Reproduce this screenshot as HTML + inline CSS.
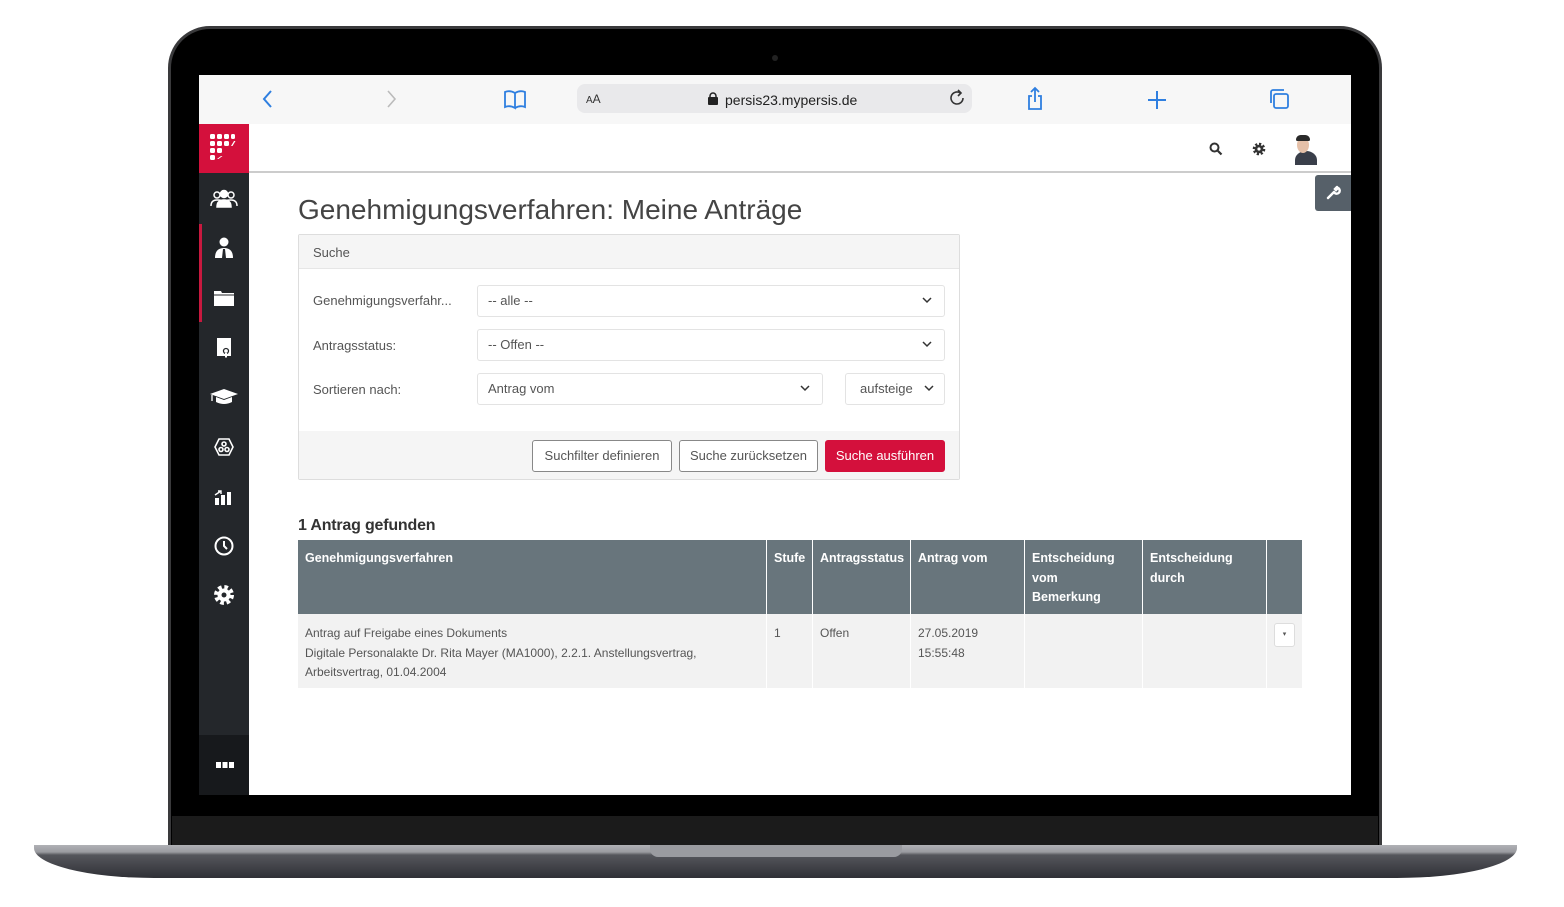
<!DOCTYPE html>
<html><head><meta charset="utf-8"><style>
*{box-sizing:border-box;margin:0;padding:0}
body{width:1564px;height:907px;background:#fff;position:relative;overflow:hidden;font-family:"Liberation Sans",sans-serif;color:#444}
.a{position:absolute}
.sel{position:absolute;border:1px solid #e3e3e3;border-radius:3px;background:#fff;font-size:13px;color:#555;padding:0 10px;line-height:30px}
.sel svg{position:absolute;right:12px;top:11px}
.btn{position:absolute;top:440px;height:32px;border:1px solid #888;border-radius:3px;background:#fff;font-size:13px;color:#555;line-height:30px;text-align:center}
.th{position:absolute;top:540px;height:74px;border-left:1px solid #fff;color:#fff;font-size:12.5px;font-weight:bold;line-height:19.5px;padding:9px 7px 0}
.td{position:absolute;top:614px;height:74px;border-left:1px solid #fff;font-size:12px;color:#555;line-height:19.5px;padding:10px 7px 0}
</style></head><body>
<!-- laptop -->
<div class="a" style="left:168px;top:26px;width:1214px;height:830px;background:#000;border-radius:42px 42px 0 0;border:3px solid #3a3a3c"></div>
<div class="a" style="left:172px;top:816px;width:1206px;height:30px;background:#1b1b1b"></div>
<div class="a" style="left:34px;top:845px;width:1483px;height:33px;background:linear-gradient(#b0b1b5 0,#9a9ba0 7px,#55565c 10px,#2f3036 33px);border-radius:0 0 120px 120px/0 0 30px 30px"></div>
<div class="a" style="left:650px;top:845px;width:252px;height:12px;background:#9a9ba0;border-radius:0 0 8px 8px"></div>
<div class="a" style="left:772px;top:55px;width:6px;height:6px;border-radius:50%;background:#222"></div>
<!-- screen -->
<div class="a" style="left:199px;top:75px;width:1152px;height:720px;background:#fff;overflow:hidden">
 <div class="a" style="left:0;top:0;width:1152px;height:49px;background:#f7f7f7"></div>
 <svg class="a" style="left:62px;top:14px" width="14" height="20"><path d="M10 2L3 10l7 8" fill="none" stroke="#2f7fe0" stroke-width="2"/></svg>
 <svg class="a" style="left:185px;top:14px" width="14" height="20"><path d="M4 2l7 8-7 8" fill="none" stroke="#bbb" stroke-width="1.6"/></svg>
 <svg class="a" style="left:304px;top:13px" width="24" height="22"><path d="M2 4q5-2 10 1v15q-5-3-10-1zM12 5q5-3 10-1v15q-5-2-10 1" fill="none" stroke="#2f7fe0" stroke-width="1.8"/></svg>
 <div class="a" style="left:378px;top:9px;width:395px;height:29px;background:#e9e9eb;border-radius:8px"></div>
 <div class="a" style="left:387px;top:17px;font-size:12px;color:#333"><span style="font-size:10px">A</span>A</div>
 <svg class="a" style="left:508px;top:17px" width="12" height="13"><rect x="1" y="5" width="10" height="8" rx="1" fill="#222"/><path d="M3 6V4a3 3 0 016 0v2" fill="none" stroke="#222" stroke-width="1.5"/></svg>
 <div class="a" style="left:526px;top:17px;font-size:14px;color:#222">persis23.mypersis.de</div>
 <svg class="a" style="left:750px;top:14px" width="18" height="20"><path d="M14 9a6 6 0 11-3-5.2" fill="none" stroke="#333" stroke-width="1.6"/><path d="M9 1l3 3-3 3" fill="none" stroke="#333" stroke-width="1.6"/></svg>
 <svg class="a" style="left:826px;top:11px" width="20" height="26"><path d="M7 10H4v13h12V10h-3M10 2v14M6 6l4-4 4 4" fill="none" stroke="#2f7fe0" stroke-width="1.8"/></svg>
 <svg class="a" style="left:948px;top:15px" width="20" height="20"><path d="M10 1v18M1 10h18" stroke="#2f7fe0" stroke-width="2"/></svg>
 <svg class="a" style="left:1069px;top:13px" width="22" height="22"><rect x="6" y="6" width="14" height="14" rx="2" fill="none" stroke="#2f7fe0" stroke-width="1.8"/><path d="M3 15V4a2 2 0 012-2h11" fill="none" stroke="#2f7fe0" stroke-width="1.8"/></svg>
 <!-- app header -->
 <div class="a" style="left:0;top:49px;width:50px;height:49px;background:#d4103c"></div>
 <svg class="a" style="left:11px;top:59px" width="28" height="28" fill="#fff"><g><rect x="0" y="0" width="5" height="5" rx="1.5"/><rect x="7" y="0" width="5" height="5" rx="1.5"/><rect x="14" y="0" width="5" height="5" rx="1.5"/><rect x="21" y="0" width="4" height="5" rx="1.5"/><rect x="0" y="7" width="5" height="5" rx="1.5"/><rect x="7" y="7" width="5" height="5" rx="1.5"/><rect x="14" y="7" width="5" height="5" rx="1.5"/><rect x="0" y="14" width="5" height="5" rx="1.5"/><rect x="7" y="14" width="5" height="5" rx="1.5"/><rect x="0" y="21" width="5" height="5" rx="1.5"/><path d="M21 12l3-5h1.5l-3 5zM7 25l4-3h1.5l-4 3z"/></g></svg>
 <div class="a" style="left:50px;top:96px;width:1102px;height:2px;background:#ccc"></div>
 <svg class="a" style="left:1010px;top:67px" width="14" height="14"><circle cx="5.5" cy="5.5" r="4" fill="none" stroke="#333" stroke-width="2"/><path d="M8.5 8.5l4 4" stroke="#333" stroke-width="2.2"/></svg>
 <svg class="a" style="left:1053px;top:67px" width="14" height="14"><circle cx="7" cy="7" r="5" fill="none" stroke="#333" stroke-width="2.6" stroke-dasharray="2.2 1.7"/><circle cx="7" cy="7" r="4.3" fill="#333"/><circle cx="7" cy="7" r="1.6" fill="#fff"/></svg>
 <div class="a" style="left:1090px;top:60px;width:28px;height:30px;overflow:hidden">
  <div class="a" style="left:6px;top:16px;width:22px;height:18px;background:#3a3f4a;border-radius:50% 50% 0 0"></div>
  <div class="a" style="left:8px;top:2px;width:12px;height:16px;background:#e5c0a8;border-radius:50%"></div>
  <div class="a" style="left:7px;top:0;width:14px;height:6px;background:#2a2a2a;border-radius:7px 7px 2px 2px"></div>
 </div>
 <div class="a" style="left:1116px;top:100px;width:36px;height:36px;background:#566069;border-radius:3px 0 0 3px"></div>
 <svg class="a" style="left:1126px;top:110px" width="16" height="16"><path d="M3 13l6-6M9 7a3 3 0 104-4l-2 2-1-1 2-2" fill="none" stroke="#fff" stroke-width="2.4" stroke-linecap="round"/></svg>
 <!-- sidebar -->
 <div class="a" style="left:0;top:98px;width:50px;height:622px;background:#24272b"></div>
 <div class="a" style="left:0;top:660px;width:50px;height:60px;background:#17191c"></div>
 <div class="a" style="left:0;top:149px;width:3px;height:98px;background:#c8193f"></div>
 <svg class="a" style="left:11px;top:114px" width="28" height="20" fill="none" stroke="#fff" stroke-width="1.5"><circle cx="7" cy="6" r="3"/><circle cx="21" cy="6" r="3"/><path d="M1 17q0-6 6-6t5 2M27 17q0-6-6-6t-5 2"/><circle cx="14" cy="5" r="3.5" fill="#fff"/><path d="M7 18q0-7 7-7t7 7z" fill="#fff"/></svg>
 <svg class="a" style="left:15px;top:162px" width="20" height="22" fill="#fff"><circle cx="10" cy="5" r="4.5"/><path d="M1 21q0-10 9-10t9 10z"/><path d="M9 12h2l1 9h-4z" fill="#24272b"/></svg>
 <svg class="a" style="left:15px;top:215px" width="20" height="16" fill="#fff"><path d="M0 1h7l1 2h12v13H0z"/><path d="M0 5h20" stroke="#24272b" stroke-width="1"/></svg>
 <svg class="a" style="left:17px;top:262px" width="16" height="22" fill="#fff"><path d="M1 1h14v18H1z"/><circle cx="10" cy="14" r="2.5" fill="none" stroke="#24272b" stroke-width="1.3"/><path d="M9 16v5l1-1 1 1v-5" fill="#fff"/></svg>
 <svg class="a" style="left:11px;top:314px" width="28" height="16" fill="#fff"><path d="M0 5l14-5 14 5-14 5z"/><path d="M6 8v5q8 4 16 0V8l-8 3z"/><path d="M2 6v6" stroke="#fff" stroke-width="1.3"/></svg>
 <svg class="a" style="left:15px;top:362px" width="20" height="20" fill="none" stroke="#fff" stroke-width="1.6"><path d="M5 2h10l4 8-4 8H5L1 10z"/><circle cx="10" cy="7" r="2"/><circle cx="7" cy="12.5" r="2"/><circle cx="13" cy="12.5" r="2"/></svg>
 <svg class="a" style="left:15px;top:411px" width="20" height="20" fill="#fff"><rect x="1" y="12" width="4" height="7"/><rect x="7" y="9" width="4" height="10"/><rect x="13" y="6" width="4" height="13"/><path d="M1 9l6-4M4 5h3v3" stroke="#fff" stroke-width="1.4" fill="none"/></svg>
 <svg class="a" style="left:14px;top:460px" width="22" height="22" fill="none" stroke="#fff" stroke-width="2"><circle cx="11" cy="11" r="8.5"/><path d="M11 6v5l3 3"/></svg>
 <svg class="a" style="left:14px;top:509px" width="22" height="22"><circle cx="11" cy="11" r="8" fill="none" stroke="#fff" stroke-width="4" stroke-dasharray="3.6 2.7"/><circle cx="11" cy="11" r="6.5" fill="#fff"/><circle cx="11" cy="11" r="2.5" fill="#24272b"/></svg>
 <svg class="a" style="left:17px;top:687px" width="18" height="6" fill="#fff"><rect x="0" y="0" width="5" height="6"/><rect x="6.5" y="0" width="5" height="6"/><rect x="13" y="0" width="5" height="6"/></svg>
 <!-- content -->
 <div class="a" style="left:99px;top:119px;font-size:28px;color:#444">Genehmigungsverfahren: Meine Anträge</div>
 <div class="a" style="left:99px;top:159px;width:662px;height:246px;border:1px solid #ddd;border-radius:2px;background:#fff"></div>
 <div class="a" style="left:100px;top:160px;width:660px;height:34px;background:#f5f5f5;border-bottom:1px solid #e6e6e6"></div>
 <div class="a" style="left:114px;top:170px;font-size:13px;color:#555">Suche</div>
 <div class="a" style="left:114px;top:218px;font-size:13px;color:#555">Genehmigungsverfahr...</div>
 <div class="a" style="left:114px;top:263px;font-size:13px;color:#555">Antragsstatus:</div>
 <div class="a" style="left:114px;top:307px;font-size:13px;color:#555">Sortieren nach:</div>
 <div class="sel" style="left:278px;top:210px;width:468px;height:32px">-- alle --<svg width="10" height="7"><path d="M1 1l4 4 4-4" fill="none" stroke="#333" stroke-width="1.5"/></svg></div>
 <div class="sel" style="left:278px;top:254px;width:468px;height:32px">-- Offen --<svg width="10" height="7"><path d="M1 1l4 4 4-4" fill="none" stroke="#333" stroke-width="1.5"/></svg></div>
 <div class="sel" style="left:278px;top:298px;width:346px;height:32px">Antrag vom<svg width="10" height="7"><path d="M1 1l4 4 4-4" fill="none" stroke="#333" stroke-width="1.5"/></svg></div>
 <div class="sel" style="left:646px;top:298px;width:100px;height:32px;padding-left:14px">aufsteige<svg width="10" height="7" style="right:10px"><path d="M1 1l4 4 4-4" fill="none" stroke="#333" stroke-width="1.5"/></svg></div>
 <div class="a" style="left:100px;top:356px;width:660px;height:48px;background:#f5f5f5"></div>
 <div class="btn" style="left:333px;top:365px;width:140px">Suchfilter definieren</div>
 <div class="btn" style="left:480px;top:365px;width:139px">Suche zurücksetzen</div>
 <div class="btn" style="left:626px;top:365px;width:120px;background:#d4103c;border-color:#d4103c;color:#fff">Suche ausführen</div>
 <div class="a" style="left:99px;top:442px;font-size:16px;color:#333;font-weight:bold;letter-spacing:-0.2px">1 Antrag gefunden</div>
 <div class="a" style="left:99px;top:465px;width:1004px;height:74px;background:#68757c"></div>
 <div class="a" style="left:99px;top:539px;width:1004px;height:74px;background:#f2f2f2"></div>
</div>
<!-- table (page coords) -->
<div class="th" style="left:298px;width:468px;border-left:none">Genehmigungsverfahren</div>
<div class="th" style="left:766px;width:46px">Stufe</div>
<div class="th" style="left:812px;width:98px">Antragsstatus</div>
<div class="th" style="left:910px;width:114px">Antrag vom</div>
<div class="th" style="left:1024px;width:118px;padding-right:20px">Entscheidung vom<br>Bemerkung</div>
<div class="th" style="left:1142px;width:124px">Entscheidung durch</div>
<div class="th" style="left:1266px;width:36px"></div>
<div class="td" style="left:298px;width:468px;border-left:none">Antrag auf Freigabe eines Dokuments<br>Digitale Personalakte Dr. Rita Mayer (MA1000), 2.2.1. Anstellungsvertrag, Arbeitsvertrag, 01.04.2004</div>
<div class="td" style="left:766px;width:46px">1</div>
<div class="td" style="left:812px;width:98px">Offen</div>
<div class="td" style="left:910px;width:114px">27.05.2019<br>15:55:48</div>
<div class="td" style="left:1024px;width:118px"></div>
<div class="td" style="left:1142px;width:124px"></div>
<div class="td" style="left:1266px;width:36px"></div>
<div class="a" style="left:1274px;top:623px;width:21px;height:24px;background:#fff;border:1px solid #ddd;border-radius:3px;font-size:7px;text-align:center;line-height:22px;color:#555">▾</div>
</body></html>
